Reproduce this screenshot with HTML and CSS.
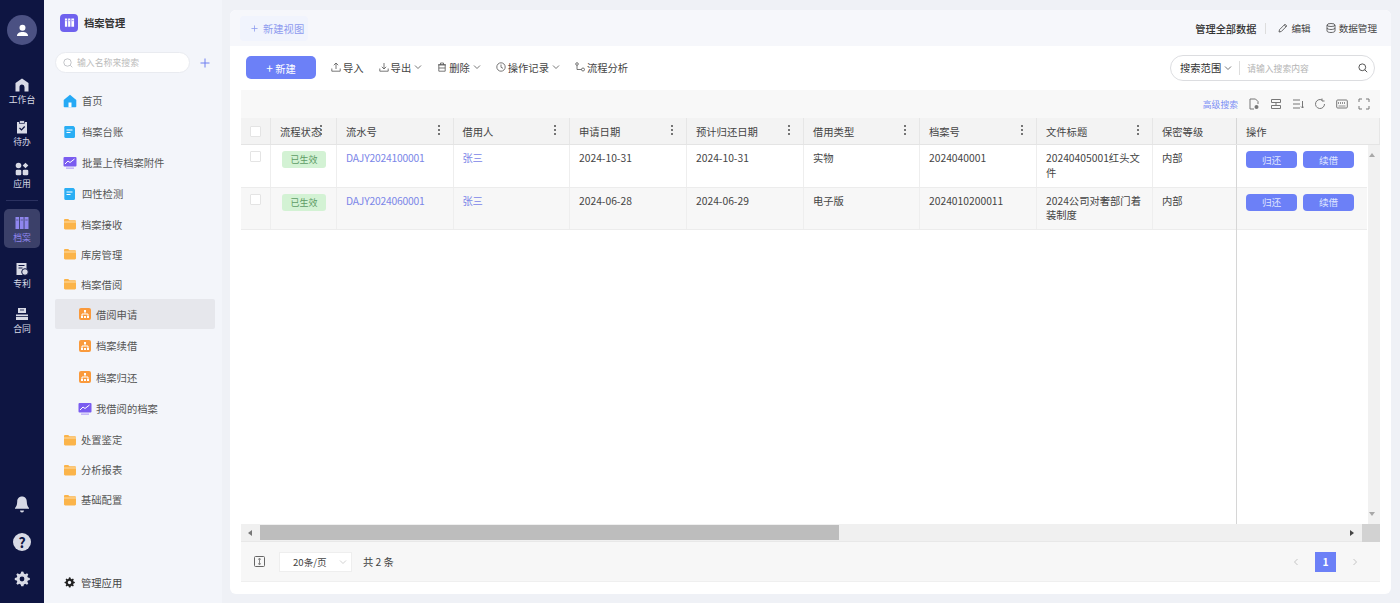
FILE: index.html
```html
<!DOCTYPE html>
<html lang="zh-CN">
<head>
  <meta charset="UTF-8">
  <title>档案管理</title>
  <link rel="stylesheet" href="styles.css">
</head>
<body>

  <svg class="defs" width="0" height="0">
    <symbol id="i-folder" viewBox="0 0 14 14">
      <path d="M1 3.2c0-.7.5-1.2 1.2-1.2h3l1.3 1.3h5.300c.7 0 1.200.5 1.200 1.200v6.800c0 .7-.5 1.200-1.200 1.200H2.200c-.7 0-1.200-.5-1.200-1.200z" fill="#fbb44a"/>
      <path d="M1 5h12" stroke="#fde2b4" stroke-width=".9"/>
    </symbol>
    <symbol id="i-doc" viewBox="0 0 14 14">
      <path d="M2.500 1h8l1.500 1.500v9.300c0 .7-.5 1.200-1.200 1.200H2.500c-.7 0-1.200-.5-1.200-1.200V2.200c0-.7.5-1.200 1.200-1.200z" fill="#2aaef4"/>
      <path d="M3.500 5h6M3.500 7.500h4" stroke="#fff" stroke-width="1.100"/>
    </symbol>
    <symbol id="i-chart" viewBox="0 0 14 14">
      <rect x=".5" y="1" width="13" height="9.500" rx="1" fill="#7a5cf0"/>
      <path d="M2 8l3-3 2 1.500L11.500 3" stroke="#fff" stroke-width="1" fill="none"/>
      <rect x="3" y="11.500" width="8" height="1.300" fill="#b9a9f7"/>
    </symbol>
    <symbol id="i-org" viewBox="0 0 14 14">
      <rect x="1" y="1" width="12" height="12" rx="2" fill="#fa9a3c"/>
      <path d="M7 3.500v3M4 10V7h6v3" stroke="#fff" stroke-width="1" fill="none"/>
      <path d="M3 9h2v2H3zM6 9h2v2H6zM9 9h2v2H9zM6 3h2v2H6z" fill="#fff"/>
    </symbol>
    <symbol id="i-kebab" viewBox="0 0 4 12">
      <circle cx="2" cy="2" r="1.100"/><circle cx="2" cy="6" r="1.100"/><circle cx="2" cy="10" r="1.100"/>
    </symbol>
    <symbol id="i-caret" viewBox="0 0 8 8">
      <path d="M1 2.500l3 3 3-3" fill="none" stroke="currentColor" stroke-width=".9"/>
    </symbol>
  </svg>

  <nav class="rail">
    <div class="avatar">
      <svg viewBox="0 0 14 14" width="13" height="13"><circle cx="7" cy="4" r="3.200" fill="#fff"/><path d="M1 13c0-3 2.500-4.500 6-4.500s6 1.500 6 4.500z" fill="#fff"/></svg>
    </div>
    <a class="rail-item">
      <svg viewBox="0 0 14 14" width="14" height="14"><path d="M7 .5L13.500 5v8.500H9.500V9a2.500 2.500 0 0 0-5 0v4.500H.5V5z" fill="#d8dae6"/></svg>
      <span>工作台</span>
    </a>
    <a class="rail-item">
      <svg viewBox="0 0 14 14" width="14" height="14"><path d="M2 2h10v11.500H2z" fill="#d8dae6"/><rect x="4.500" y=".7" width="5" height="2.600" fill="#d8dae6" stroke="#0e1542" stroke-width=".7"/><path d="M4.500 8l2 2 3.200-3.500" stroke="#0e1542" stroke-width="1.200" fill="none"/></svg>
      <span>待办</span>
    </a>
    <a class="rail-item">
      <svg viewBox="0 0 14 14" width="14" height="14"><circle cx="3.500" cy="3.500" r="2.800" fill="#d8dae6"/><path d="M10.500.7l2.800 2.800-2.800 2.800-2.800-2.800z" fill="#d8dae6"/><rect x=".7" y="7.700" width="5.600" height="5.600" rx="1.400" fill="#d8dae6"/><rect x="7.700" y="7.700" width="5.600" height="5.600" rx="1.400" fill="#d8dae6"/></svg>
      <span>应用</span>
    </a>
    <div class="rail-sep"></div>
    <a class="rail-item active">
      <svg viewBox="0 0 14 14" width="14" height="14"><path d="M.5 1h3.600v12H.5zM5 1h3.600v12H5zM9.500 1h4v12h-4z" fill="#8f86ee"/><path d="M1.200 4h2.200M5.700 4h2.200M10.300 4h2.400" stroke="#4c4f7c" stroke-width=".8"/></svg>
      <span>档案</span>
    </a>
    <a class="rail-item">
      <svg viewBox="0 0 14 14" width="14" height="14"><path d="M1.500 1h10v12h-10z" fill="#d8dae6"/><path d="M3.500 3.500h6M3.500 6h4" stroke="#0e1542"/><circle cx="10" cy="10" r="3.300" fill="#d8dae6" stroke="#0e1542"/></svg>
      <span>专利</span>
    </a>
    <a class="rail-item low">
      <svg viewBox="0 0 14 14" width="14" height="14"><path d="M3 1h8v5H3zM1 7.500h12V13H1z" fill="#d8dae6"/><path d="M5 3h4M1 9.500h12" stroke="#0e1542" stroke-width=".8"/></svg>
      <span>合同</span>
    </a>
    <div class="rail-bottom">
      <svg viewBox="0 0 16 18" width="16" height="18"><path d="M8 1.500c3 0 4.800 2.200 4.800 5.200 0 3.500 1.200 5 2.200 6.300v.8H1V13c1-1.300 2.200-2.800 2.200-6.300 0-3 1.800-5.200 4.800-5.200zM6 15.500h4a2 2 0 0 1-4 0z" fill="#d8dae6"/></svg>
      <div class="help">?</div>
      <svg viewBox="0 0 16 16" width="16" height="16"><path d="M8 .5l1.400.2.500 1.900 1.400.6 1.700-1 1.300 1.300-1 1.700.6 1.400 1.900.5v1.800l-1.900.5-.6 1.400 1 1.700-1.300 1.300-1.700-1-1.400.6-.5 1.900H7.200l-.5-1.900-1.400-.6-1.700 1-1.300-1.300 1-1.700-.6-1.400-1.900-.5V7.100l1.900-.5.6-1.400-1-1.700 1.300-1.300 1.700 1 1.400-.6.500-1.900z" fill="#d8dae6"/><circle cx="8" cy="8" r="2.400" fill="#0e1542"/></svg>
    </div>
  </nav>

  <aside class="sidebar">
    <div class="side-title">
      <span class="side-logo">
        <svg viewBox="0 0 12 12" width="11" height="11"><path d="M1 1.500h2.500v9H1zM4.500 1.500H7v9H4.500zM8 1.500h3v9H8z" fill="#fff"/><path d="M1.500 4h1.500M5 4h1.500M8.500 4H10.500" stroke="#6f62ee" stroke-width=".7"/></svg>
      </span>
      <b>档案管理</b>
    </div>
    <div class="side-search">
      <div class="side-input">
        <svg viewBox="0 0 10 10" width="10" height="10"><circle cx="4.500" cy="4.500" r="3.700" fill="none" stroke="#b5b7bd" stroke-width=".8"/><path d="M7.300 7.300l2 2" stroke="#b5b7bd" stroke-width=".8"/></svg>
        <span>输入名称来搜索</span>
      </div>
      <svg class="side-plus" viewBox="0 0 10 10" width="10" height="10"><path d="M5 .5v9M.5 5h9" stroke="#6e7ff0" stroke-width="1"/></svg>
    </div>
    <ul class="menu">
      <li class="tall">
        <svg viewBox="0 0 14 14" width="14" height="14"><path d="M7 .7l6.300 5.300v6.500c0 .5-.4.800-.8.800h-11c-.4 0-.8-.3-.8-.8V6z" fill="#25a9f5"/><rect x="5.500" y="8.500" width="3" height="4.800" fill="#fff"/></svg>
        <span>首页</span>
      </li>
      <li class="tall"><svg width="14" height="14"><use href="#i-doc"/></svg><span>档案台账</span></li>
      <li class="tall"><svg width="14" height="14"><use href="#i-chart"/></svg><span>批量上传档案附件</span></li>
      <li class="tall"><svg width="14" height="14"><use href="#i-doc"/></svg><span>四性检测</span></li>
      <li class="folder"><svg width="14" height="14"><use href="#i-folder"/></svg><span>档案接收</span></li>
      <li class="folder"><svg width="14" height="14"><use href="#i-folder"/></svg><span>库房管理</span></li>
      <li class="folder"><svg width="14" height="14"><use href="#i-folder"/></svg><span>档案借阅</span></li>
      <li class="sub selected"><svg width="14" height="14"><use href="#i-org"/></svg><span>借阅申请</span></li>
      <li class="sub"><svg width="14" height="14"><use href="#i-org"/></svg><span>档案续借</span></li>
      <li class="sub"><svg width="14" height="14"><use href="#i-org"/></svg><span>档案归还</span></li>
      <li class="sub"><svg width="14" height="14"><use href="#i-chart"/></svg><span>我借阅的档案</span></li>
      <li class="folder"><svg width="14" height="14"><use href="#i-folder"/></svg><span>处置鉴定</span></li>
      <li class="folder"><svg width="14" height="14"><use href="#i-folder"/></svg><span>分析报表</span></li>
      <li class="folder"><svg width="14" height="14"><use href="#i-folder"/></svg><span>基础配置</span></li>
    </ul>
    <div class="side-foot">
      <svg viewBox="0 0 16 16" width="11" height="11"><path d="M8 .5l1.400.2.500 1.900 1.400.6 1.700-1 1.300 1.300-1 1.700.6 1.400 1.900.5v1.800l-1.900.5-.6 1.400 1 1.700-1.300 1.300-1.700-1-1.400.6-.5 1.900H7.200l-.5-1.900-1.400-.6-1.700 1-1.300-1.300 1-1.700-.6-1.400-1.900-.5V7.100l1.900-.5.6-1.400-1-1.700 1.300-1.300 1.700 1 1.400-.6.500-1.900z" fill="#222"/><circle cx="8" cy="8" r="2.400" fill="#f3f5fa"/></svg>
      <span>管理应用</span>
    </div>
  </aside>

  <main class="main">
    <header class="view-bar">
      <div class="view-tab">
        <svg viewBox="0 0 8 8" width="7" height="7"><path d="M4 .5v7M.5 4h7" stroke="#8e9bef" stroke-width=".9"/></svg>
        <span>新建视图</span>
      </div>
      <div class="view-right">
        <b>管理全部数据</b>
        <i class="vsep"></i>
        <span class="view-link">
          <svg viewBox="0 0 10 10" width="10" height="10"><path d="M1 9l.5-2.300L7 1.200l1.800 1.800L3.300 8.500zM6.200 2l1.800 1.800" fill="none" stroke="#444" stroke-width=".8"/></svg>
          编辑
        </span>
        <span class="view-link">
          <svg viewBox="0 0 10 10" width="10" height="10"><ellipse cx="5" cy="2" rx="4" ry="1.500" fill="none" stroke="#444" stroke-width=".8"/><path d="M1 2v6c0 .8 1.800 1.500 4 1.500S9 8.800 9 8V2M1 5c0 .8 1.800 1.500 4 1.500S9 5.800 9 5" fill="none" stroke="#444" stroke-width=".8"/></svg>
          数据管理
        </span>
      </div>
    </header>

    <div class="toolbar">
      <button class="btn-new"><em>+</em> 新建</button>
      <div class="tool imp">
        <svg viewBox="0 0 10 10" width="10" height="10"><path d="M5 7V1.200M2.800 3.200L5 1l2.200 2.200M.8 6.500v2.700h8.400V6.500" fill="none" stroke="#555" stroke-width=".8"/></svg>
        导入
      </div>
      <div class="tool exp">
        <svg viewBox="0 0 10 10" width="10" height="10"><path d="M5 1v5.800M2.800 4.800L5 7l2.200-2.200M.8 6.500v2.700h8.400V6.500" fill="none" stroke="#555" stroke-width=".8"/></svg>
        导出<svg class="caret" width="8" height="8"><use href="#i-caret"/></svg>
      </div>
      <div class="tool del">
        <svg viewBox="0 0 10 10" width="10" height="10"><path d="M1.800 2.800h6.400v6.400H1.800zM1 2.800h8M3.500 2.800V1h3v1.800M1.800 6h6.400" fill="none" stroke="#555" stroke-width=".8"/></svg>
        删除<svg class="caret" width="8" height="8"><use href="#i-caret"/></svg>
      </div>
      <div class="tool rec">
        <svg viewBox="0 0 10 10" width="10" height="10"><circle cx="5" cy="5" r="4.200" fill="none" stroke="#555" stroke-width=".8"/><path d="M5 2.500V5.300l2 1" fill="none" stroke="#555" stroke-width=".8"/></svg>
        操作记录<svg class="caret" width="8" height="8"><use href="#i-caret"/></svg>
      </div>
      <div class="tool">
        <svg viewBox="0 0 10 10" width="10" height="10"><circle cx="2" cy="2" r="1.300" fill="none" stroke="#555" stroke-width=".8"/><circle cx="8" cy="7.500" r="1.500" fill="none" stroke="#555" stroke-width=".8"/><path d="M2 3.300v4.200h4.500" fill="none" stroke="#555" stroke-width=".8"/></svg>
        流程分析
      </div>
      <div class="range-search">
        <span class="range">搜索范围<svg class="caret" width="8" height="8"><use href="#i-caret"/></svg></span>
        <span class="range-input">请输入搜索内容</span>
        <svg viewBox="0 0 10 10" width="10" height="10"><circle cx="4.300" cy="4.300" r="3.400" fill="none" stroke="#444" stroke-width=".9"/><path d="M6.800 6.800l2.400 2.400" stroke="#444" stroke-width=".9"/></svg>
      </div>
    </div>

    <div class="content">
      <div class="table-tools">
        <a class="adv">高级搜索</a>
        <svg viewBox="0 0 12 12" width="12" height="12"><path d="M2 1h5.500L10 3.500V6M2 1v10h4" fill="none" stroke="#777"/><circle cx="8.500" cy="9" r="2" fill="#777"/></svg>
        <svg viewBox="0 0 12 12" width="12" height="12"><path d="M1.500 1.500h9v3h-9zM1.500 7.500h9v3h-9z" fill="none" stroke="#777"/><path d="M6 4.500v3" stroke="#777"/></svg>
        <svg viewBox="0 0 12 12" width="12" height="12"><path d="M1 2h7M1 6h7M1 10h7M10.500 3v7M9 8.500l1.500 1.500L12 8.500" fill="none" stroke="#777"/></svg>
        <svg viewBox="0 0 12 12" width="12" height="12"><path d="M10.500 6A4.500 4.500 0 1 1 8 2M8 .5V3h2.500" fill="none" stroke="#777"/></svg>
        <svg viewBox="0 0 12 12" width="12" height="12"><rect x=".7" y="2" width="10.600" height="8" rx="1" fill="none" stroke="#777"/><path d="M2.500 4v2M4.500 4v2M6.500 4v2M8.500 4v2M2.500 8h7" stroke="#777" stroke-width=".8"/></svg>
        <svg viewBox="0 0 12 12" width="12" height="12"><path d="M1 4V1h3M8 1h3v3M11 8v3H8M4 11H1V8" fill="none" stroke="#777"/></svg>
      </div>

      <div class="thead">
        <div class="th check"><i class="box"></i></div>
        <div class="th">流程状态<svg class="kebab tight" width="4" height="12"><use href="#i-kebab"/></svg></div>
        <div class="th">流水号<svg class="kebab" width="4" height="12"><use href="#i-kebab"/></svg></div>
        <div class="th">借用人<svg class="kebab" width="4" height="12"><use href="#i-kebab"/></svg></div>
        <div class="th">申请日期<svg class="kebab" width="4" height="12"><use href="#i-kebab"/></svg></div>
        <div class="th">预计归还日期<svg class="kebab" width="4" height="12"><use href="#i-kebab"/></svg></div>
        <div class="th">借用类型<svg class="kebab" width="4" height="12"><use href="#i-kebab"/></svg></div>
        <div class="th">档案号<svg class="kebab" width="4" height="12"><use href="#i-kebab"/></svg></div>
        <div class="th">文件标题<svg class="kebab" width="4" height="12"><use href="#i-kebab"/></svg></div>
        <div class="th">保密等级</div>
        <div class="th op">操作</div>
      </div>

      <div class="tbody">
        <div class="rows">
          <div class="row">
            <div class="td check"><i class="box"></i></div>
            <div class="td"><span class="tag">已生效</span></div>
            <div class="td link">DAJY2024100001</div>
            <div class="td link">张三</div>
            <div class="td">2024-10-31</div>
            <div class="td">2024-10-31</div>
            <div class="td">实物</div>
            <div class="td">2024040001</div>
            <div class="td">20240405001红头文件</div>
            <div class="td">内部</div>
          </div>
          <div class="row even">
            <div class="td check"><i class="box"></i></div>
            <div class="td"><span class="tag">已生效</span></div>
            <div class="td link">DAJY2024060001</div>
            <div class="td link">张三</div>
            <div class="td">2024-06-28</div>
            <div class="td">2024-06-29</div>
            <div class="td">电子版</div>
            <div class="td">2024010200011</div>
            <div class="td">2024公司对奢部门着装制度</div>
            <div class="td">内部</div>
          </div>
        </div>
        <div class="rows-fixed">
          <div class="row-op"><button>归还</button><button>续借</button></div>
          <div class="row-op even"><button>归还</button><button>续借</button></div>
        </div>
        <div class="vscroll">
          <i class="arrow-up"></i>
          <i class="arrow-down"></i>
        </div>
      </div>

      <div class="hscroll">
        <i class="arrow-left"></i>
        <div class="hthumb"></div>
        <i class="arrow-right"></i>
        <div class="corner"></div>
      </div>

      <footer class="pager">
        <svg viewBox="0 0 11 11" width="11" height="11"><rect x=".5" y=".5" width="10" height="10" rx="1" fill="none" stroke="#666"/><path d="M5.500 2.500v6M4 3.500l1.500-1 1.500 1M4 7.500l1.500 1 1.500-1" fill="none" stroke="#666" stroke-width=".8"/></svg>
        <div class="page-size">20条/页<svg class="caret" width="8" height="8"><use href="#i-caret"/></svg></div>
        <span class="total">共 2 条</span>
        <div class="pages">
          <svg viewBox="0 0 8 8" width="8" height="8"><path d="M5.500 1L2.500 4l3 3" fill="none" stroke="#c4c4c4"/></svg>
          <span class="page-on">1</span>
          <svg viewBox="0 0 8 8" width="8" height="8"><path d="M2.500 1l3 3-3 3" fill="none" stroke="#c4c4c4"/></svg>
        </div>
      </footer>
    </div>
  </main>

</body>
</html>
```
FILE: styles.css
```css
* {
  margin: 0;
  padding: 0;
  box-sizing: border-box;
}

body {
  width: 1400px;
  height: 603px;
  overflow: hidden;
  display: flex;
  background-color: #eff1f6;
  color: #444;
  font-family: "Noto Sans CJK SC", "Noto Sans", sans-serif;
  font-size: 10.3px;
}

.defs {
  position: absolute;
}

button {
  font-family: inherit;
  border: none;
}

em, i {
  font-style: normal;
}

/* Left rail */
.rail {
  width: 44px;
  flex-shrink: 0;
  display: flex;
  flex-direction: column;
  align-items: center;
  padding-top: 15px;
  background-color: #0e1542;
  color: #d8dae6;
}

.avatar {
  width: 30px;
  height: 30px;
  margin-bottom: 26px;
  border-radius: 50%;
  background-color: #4b5183;
  display: flex;
  justify-content: center;
  align-items: center;
}

.rail-item {
  width: 36px;
  height: 42px;
  display: flex;
  flex-direction: column;
  justify-content: center;
  align-items: center;
  gap: 2px;
  font-size: 8.8px;
  line-height: 12px;
}

.rail-item.low {
  padding-top: 3px;
}

.rail-sep {
  width: 32px;
  height: 1px;
  margin: 3px 0 8px;
  background-color: #2b3160;
}

.rail-item.active {
  height: 39px;
  padding-top: 3px;
  margin-bottom: 6px;
  border-radius: 5px;
  background-color: #3b4069;
  color: #8f86ee;
}

.rail-item.active + .rail-item {
  padding-top: 1px;
  margin-bottom: 2px;
}

.rail-bottom {
  margin-top: auto;
  padding-bottom: 16px;
  display: flex;
  flex-direction: column;
  align-items: center;
  gap: 20px;
}

.help {
  width: 18px;
  height: 18px;
  border-radius: 50%;
  background-color: #d8dae6;
  color: #0e1542;
  font-size: 14px;
  font-weight: 700;
  line-height: 18px;
  text-align: center;
}

/* Sidebar */
.sidebar {
  width: 178px;
  flex-shrink: 0;
  display: flex;
  flex-direction: column;
  margin-right: 8px;
  background-color: #f3f5fa;
}

.side-title {
  height: 45px;
  padding-left: 16px;
  display: flex;
  align-items: center;
  gap: 6px;
  color: #333;
}

.side-logo {
  width: 18px;
  height: 18px;
  border-radius: 4px;
  background-color: #6f62ee;
  display: flex;
  justify-content: center;
  align-items: center;
}

.side-search {
  height: 21px;
  margin: 7px 0 12px 11px;
  display: flex;
  align-items: center;
}

.side-input {
  width: 135px;
  height: 21px;
  padding-left: 7px;
  display: flex;
  align-items: center;
  gap: 4px;
  border-radius: 11px;
  background-color: #fff;
  border: 1px solid #e9ebf0;
  color: #bbb;
  font-size: 8.9px;
}

.side-plus {
  margin-left: 10px;
}

.menu {
  list-style: none;
  padding-left: 11px;
}

.menu li {
  width: 160px;
  height: 30px;
  padding-left: 8px;
  display: flex;
  align-items: center;
  gap: 5px;
  color: #555;
}

.menu li.tall {
  height: 31px;
}

.menu li.folder {
  gap: 4px;
}

.menu li.sub {
  height: 31.5px;
  padding-left: 23px;
  gap: 4px;
}

.menu li.selected {
  height: 30px;
  margin-bottom: 1px;
  background-color: #e6e7ec;
  border-radius: 2px;
}

.side-foot {
  margin-top: auto;
  height: 40px;
  padding: 0 0 2px 20px;
  display: flex;
  align-items: center;
  gap: 6px;
  color: #444;
}

/* Main card */
.main {
  width: 1161px;
  height: 584px;
  margin-top: 10px;
  display: flex;
  flex-direction: column;
  border-radius: 6px;
  background-color: #fff;
  overflow: hidden;
}

.view-bar {
  height: 36px;
  flex-shrink: 0;
  padding: 0 14px 0 10px;
  display: flex;
  justify-content: space-between;
  align-items: center;
  background-color: #f6f7fb;
}

.view-tab {
  width: 68px;
  height: 25px;
  padding-left: 11px;
  display: flex;
  align-items: center;
  gap: 5px;
  background-color: #f1f4fd;
  border-radius: 4px;
  color: #8e9bef;
}

.view-right {
  display: flex;
  align-items: center;
  color: #444;
}

.view-right b {
  font-size: 10.2px;
  font-weight: 500;
  color: #333;
}

.vsep {
  width: 1px;
  height: 11px;
  margin: 0 12px 0 9px;
  background-color: #ddd;
}

.view-link {
  display: flex;
  align-items: center;
  gap: 3px;
  font-size: 9.6px;
}

.view-link + .view-link {
  margin-left: 15px;
}

.toolbar {
  height: 44px;
  flex-shrink: 0;
  padding: 0 16px 2px;
  display: flex;
  align-items: center;
}

.btn-new {
  width: 70px;
  height: 23px;
  margin-right: 15px;
  border-radius: 5px;
  background-color: #6c80f7;
  color: #fff;
  font-size: 10.3px;
}

.btn-new em {
  font-size: 12px;
}

.tool {
  display: flex;
  align-items: center;
  gap: 2px;
  margin-right: 15px;
  color: #444;
}

.tool .caret {
  margin-left: 1px;
}

.caret {
  color: #666;
}

.range-search {
  width: 205px;
  height: 26px;
  margin-left: auto;
  margin-top: 2px;
  padding: 0 6px 0 9px;
  display: flex;
  align-items: center;
  border: 1px solid #dcdde0;
  border-radius: 13px;
}

.range {
  display: flex;
  align-items: center;
  padding-right: 7px;
  border-right: 1px solid #ddd;
  color: #333;
  line-height: 14px;
}

.range .caret {
  margin-left: 3px;
}

.range-input {
  flex: 1;
  padding-left: 7px;
  color: #b4b4b4;
  font-size: 8.8px;
}

.content {
  flex: 1;
  margin: 0 11px 12px;
  display: flex;
  flex-direction: column;
  min-height: 0;
  background-color: #f8f8f8;
}

.table-tools {
  height: 28px;
  flex-shrink: 0;
  padding-right: 10px;
  display: flex;
  justify-content: flex-end;
  align-items: center;
  gap: 10px;
}

.adv {
  color: #7b8ef5;
  font-size: 8.8px;
}

/* Table */
.thead, .row {
  display: grid;
  grid-template-columns: 30px 66px 116.5px 116.5px 117px 117px 116px 117px 116px 84px;
}

.thead {
  grid-template-columns: 30px 66px 116.5px 116.5px 117px 117px 116px 117px 116px 84px 143px;
  height: 27px;
  flex-shrink: 0;
  background-color: #f3f3f3;
  border-bottom: 1px solid #e4e4e4;
}

.th {
  padding: 0 12px 0 9px;
  display: flex;
  justify-content: space-between;
  align-items: center;
  border-right: 1px solid #e6e6e6;
  color: #444;
}

.th.check, .td.check {
  padding: 0;
  justify-content: center;
}

.th.op {
  border-left: 1px solid #d6d6d6;
  margin-left: -1px;
}

.kebab {
  fill: #555;
  flex-shrink: 0;
  margin-top: -2px;
}

.kebab.tight {
  margin-left: -3px;
  margin-right: 1px;
}

.box {
  display: block;
  width: 11px;
  height: 11px;
  background-color: #fff;
  border: 1px solid #e4e4e4;
  border-radius: 1px;
}

.tbody {
  flex: 1;
  min-height: 0;
  display: flex;
  background-color: #fff;
}

.rows {
  width: 996px;
}

.row {
  height: 42.5px;
  border-bottom: 1px solid #ececec;
}

.row.even, .row-op.even {
  background-color: #f7f7f7;
}

.td {
  padding: 6px 9px 0;
  border-right: 1px solid #eee;
  color: #444;
  line-height: 14.5px;
}

.td.check {
  display: flex;
  padding-top: 6px;
}

.td.link {
  color: #7b86e8;
  letter-spacing: -.2px;
}

.tag {
  display: block;
  width: 44px;
  height: 17px;
  margin-left: 2px;
  border-radius: 3px;
  background-color: #d3f2d4;
  color: #5d9c66;
  font-size: 9px;
  line-height: 17px;
  text-align: center;
}

.rows-fixed {
  width: 131px;
  flex-shrink: 0;
  border-left: 1px solid #d6d6d6;
  margin-left: -1px;
}

.row-op {
  height: 42.5px;
  padding: 6px 9px 0;
  display: flex;
  gap: 6px;
  border-bottom: 1px solid #ececec;
}

.row-op button {
  width: 51px;
  height: 17px;
  border-radius: 4px;
  background-color: #6c80f7;
  color: #dfe4ff;
  font-size: 9.6px;
}

.vscroll {
  width: 12px;
  flex-shrink: 0;
  margin-left: 1px;
  padding: 8px 0 8px 1px;
  display: flex;
  flex-direction: column;
  justify-content: space-between;
  align-items: flex-start;
  background-color: #f1f1f1;
}

.arrow-up {
  border: 3px solid transparent;
  border-top: 0;
  border-bottom: 4px solid #a8a8a8;
}

.arrow-down {
  border: 3px solid transparent;
  border-bottom: 0;
  border-top: 4px solid #a8a8a8;
}

.hscroll {
  height: 18px;
  flex-shrink: 0;
  display: flex;
  align-items: center;
  background-color: #f0f0f0;
  border-bottom: 1px solid #e8e8e8;
}

.arrow-left {
  margin: 0 8px 0 7px;
  border: 3.5px solid transparent;
  border-left: 0;
  border-right: 4px solid #777;
}

.hthumb {
  width: 579px;
  height: 15px;
  background-color: #bdbdbd;
}

.arrow-right {
  margin-left: auto;
  margin-right: 8px;
  border: 3.5px solid transparent;
  border-right: 0;
  border-left: 4px solid #444;
}

.corner {
  width: 18px;
  height: 18px;
  background-color: #d2d2d2;
}

.pager {
  height: 40px;
  flex-shrink: 0;
  padding: 0 21px 0 13px;
  display: flex;
  align-items: center;
  background-color: #f7f7f7;
  border-bottom: 1px solid #efefef;
}

.page-size {
  width: 73px;
  height: 20px;
  margin-left: 14px;
  padding: 0 4px 0 13px;
  display: flex;
  justify-content: space-between;
  align-items: center;
  background-color: #fff;
  border: 1px solid #eee;
  color: #444;
  font-size: 9.6px;
}

.page-size .caret {
  color: #ccc;
}

.total {
  margin-left: 11px;
  color: #444;
}

.pages {
  margin-left: auto;
  display: flex;
  align-items: center;
  gap: 15px;
}

.page-on {
  width: 21px;
  height: 20px;
  background-color: #6c80f7;
  color: #fff;
  font-weight: 700;
  line-height: 20px;
  text-align: center;
}
```
